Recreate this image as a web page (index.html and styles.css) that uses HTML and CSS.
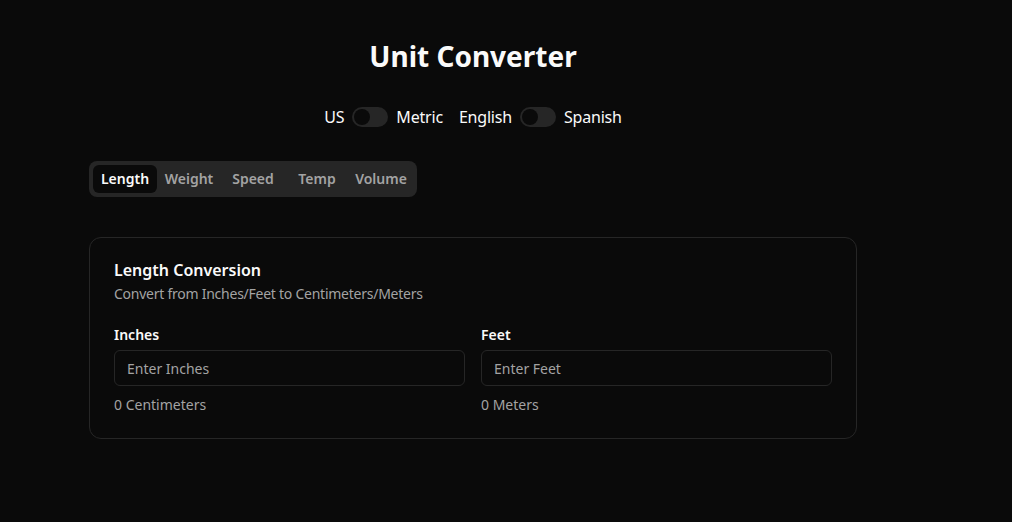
FILE: index.html
```html
<!DOCTYPE html>
<html>
<head>
<meta charset="utf-8">
<link rel="stylesheet" href="styles.css">
</head>
<body>
<div class="page">
  <h1 class="title">Unit Converter</h1>
  <div class="toggles">
    <span>US</span>
    <span class="switch"><span class="thumb"></span></span>
    <span>Metric</span>
    <span class="spacer"></span>
    <span>English</span>
    <span class="switch"><span class="thumb"></span></span>
    <span>Spanish</span>
  </div>
  <div class="content">
    <div class="tabs">
      <div class="tab active">Length</div>
      <div class="tab">Weight</div>
      <div class="tab">Speed</div>
      <div class="tab">Temp</div>
      <div class="tab">Volume</div>
    </div>
    <div class="card">
      <div class="card-title">Length Conversion</div>
      <div class="card-desc">Convert from Inches/Feet to Centimeters/Meters</div>
      <div class="fields">
        <div class="field">
          <label class="label">Inches</label>
          <input class="input" type="text" placeholder="Enter Inches">
          <div class="result">0 Centimeters</div>
        </div>
        <div class="field">
          <label class="label">Feet</label>
          <input class="input" type="text" placeholder="Enter Feet">
          <div class="result">0 Meters</div>
        </div>
      </div>
    </div>
  </div>
</div>
</body>
</html>
```
FILE: styles.css
```css
html, body {
  margin: 0;
  padding: 0;
  background: #0a0a0a;
  color: #fafafa;
  font-family: "Noto Sans", "Open Sans", sans-serif;
}
.page {
  width: 946px;
  padding-top: 36px;
}
.title {
  margin: 0;
  text-align: center;
  font-size: 28px;
  line-height: 40px;
  font-weight: 700;
}
.toggles {
  margin-top: 29px;
  display: flex;
  justify-content: center;
  align-items: center;
  gap: 8px;
  font-size: 16px;
  line-height: 24px;
  letter-spacing: -0.2px;
}
.spacer { width: 0; }
.switch {
  width: 36px;
  height: 20px;
  border-radius: 10px;
  background: #262626;
  display: flex;
  align-items: center;
  padding: 0 2px;
  box-sizing: border-box;
}
.thumb {
  width: 16px;
  height: 16px;
  border-radius: 50%;
  background: #0a0a0a;
}
.content {
  width: 768px;
  margin: 32px auto 0;
}
.tabs {
  display: inline-grid;
  grid-template-columns: repeat(5, 64px);
  padding: 4px;
  background: #262626;
  border-radius: 8px;
}
.tab {
  height: 28px;
  line-height: 28px;
  text-align: center;
  font-size: 14px;
  font-weight: 600;
  color: #a3a3a3;
  border-radius: 6px;
}
.tab.active {
  background: #0a0a0a;
  color: #fafafa;
}
.card {
  margin-top: 40px;
  border: 1px solid #262626;
  border-radius: 12px;
  padding: 20px 24px 23px;
}
.card-title {
  font-size: 16px;
  font-weight: 600;
  line-height: 24px;
}
.card-desc {
  margin-top: 2px;
  font-size: 14px;
  line-height: 20px;
  color: #a3a3a3;
  letter-spacing: -0.25px;
}
.fields {
  margin-top: 21px;
  display: grid;
  grid-template-columns: 1fr 1fr;
  gap: 16px;
}
.field {
  display: flex;
  flex-direction: column;
}
.label {
  font-size: 14px;
  font-weight: 600;
  line-height: 20px;
  margin-bottom: 5px;
}
.input {
  height: 36px;
  box-sizing: border-box;
  background: transparent;
  border: 1px solid #262626;
  border-radius: 6px;
  padding: 0 12px;
  font-family: inherit;
  font-size: 14px;
  color: #fafafa;
  outline: none;
}
.input::placeholder { color: #a3a3a3; }
.result {
  margin-top: 9px;
  font-size: 14px;
  line-height: 20px;
  color: #a3a3a3;
}
```
